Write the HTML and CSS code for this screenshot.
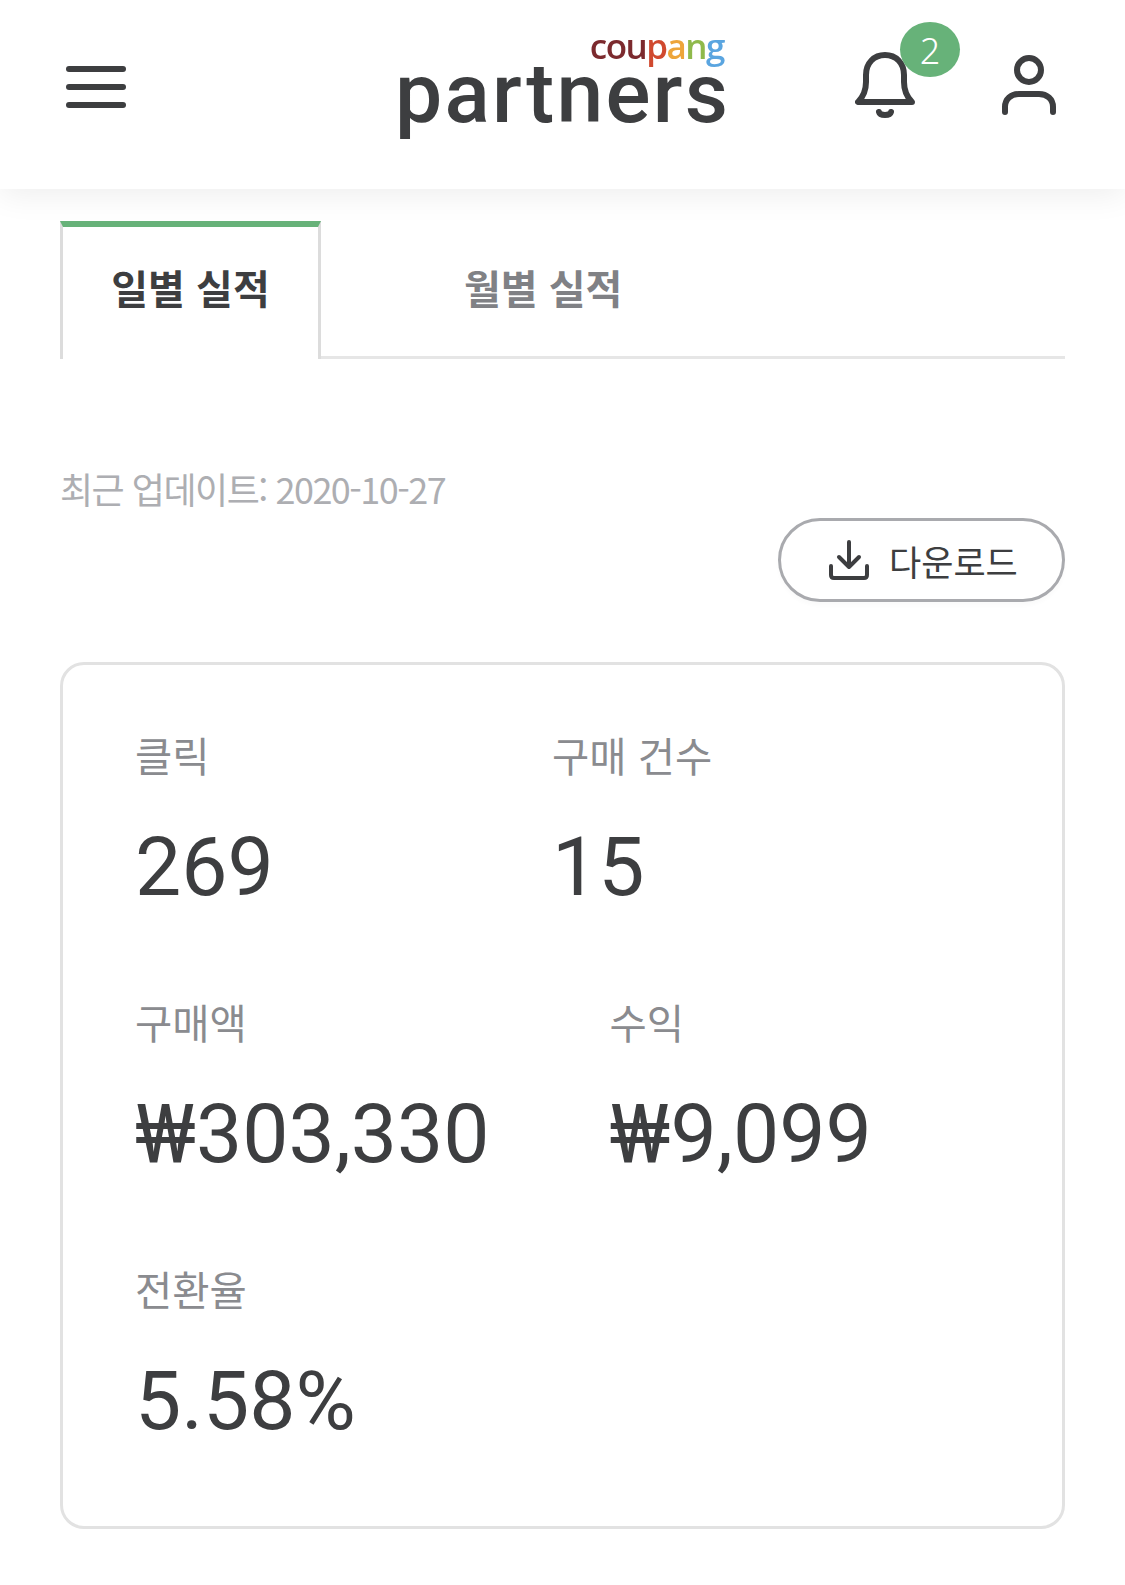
FILE: index.html
```html
<!DOCTYPE html>
<html lang="ko">
<head>
<meta charset="utf-8">
<title>partners</title>
<link rel="stylesheet" href="styles.css">
</head>
<body>
<header class="header">
  <button class="icon-btn menu" aria-label="메뉴">
    <span class="bar"></span><span class="bar"></span><span class="bar"></span>
  </button>
  <div class="logo">
    <div class="logo-top"><span class="c1">cou</span><span class="c2">p</span><span class="c3">a</span><span class="c4">n</span><span class="c5">g</span></div>
    <div class="logo-main">partners</div>
  </div>
  <div class="header-actions">
    <div class="bell">
      <svg width="60" height="66" viewBox="0 0 60 66" fill="none" stroke="#3d3e40" stroke-width="6" stroke-linecap="round" stroke-linejoin="round">
        <path d="M3 50h54c-6-6-8-12-8-20v-7C49 11 41 3 30 3S11 11 11 23v7c0 8-2 14-8 20z"/>
        <path d="M24 60c1 4 11 4 12 0" />
      </svg>
      <span class="badge">2</span>
    </div>
    <svg class="user" width="54" height="60" viewBox="0 0 54 60" fill="none" stroke="#3d3e40" stroke-width="6" stroke-linecap="round">
      <circle cx="27" cy="15" r="12"/>
      <path d="M3 57V52c0-8 6-13 14-13h20c8 0 14 5 14 13v5"/>
    </svg>
  </div>
</header>

<main class="main">
  <nav class="tabs">
    <div class="tab active">일별 실적</div>
    <div class="tab">월별 실적</div>
    <div class="tab-fill"></div>
  </nav>

  <p class="updated">최근 업데이트: 2020-10-27</p>

  <div class="toolbar">
    <button class="download">
      <svg width="42" height="42" viewBox="0 0 42 42" fill="none" stroke="#3d3e40" stroke-width="4" stroke-linecap="round" stroke-linejoin="round">
        <path d="M21 3v25M11 18l10 10 10-10"/>
        <path d="M3 27v9c0 2 1 3 3 3h30c2 0 3-1 3-3v-9"/>
      </svg>
      <span>다운로드</span>
    </button>
  </div>

  <section class="card">
    <div class="stat"><div class="label">클릭</div><div class="value">269</div></div>
    <div class="stat"><div class="label">구매 건수</div><div class="value">15</div></div>
    <div class="stat"><div class="label">구매액</div><div class="value">₩303,330</div></div>
    <div class="stat"><div class="label">수익</div><div class="value">₩9,099</div></div>
    <div class="stat"><div class="label">전환율</div><div class="value">5.58%</div></div>
  </section>
</main>
</body>
</html>
```
FILE: styles.css
```css
* { box-sizing: border-box; }
html, body { margin: 0; padding: 0; background: #fff; }
body {
  width: 1125px;
  min-height: 1585px;
  overflow: hidden;
  color: #3d3e40;
  font-family: "Noto Sans CJK KR", "Noto Sans", sans-serif;
}
.header {
  height: 189px;
  display: flex;
  align-items: flex-start;
  padding: 0 69px 0 66px;
  background: #fff;
  box-shadow: 0 6px 30px rgba(0, 0, 0, 0.07);
  position: relative;
}
.icon-btn { border: 0; background: none; padding: 0; }
.menu {
  width: 60px;
  margin-top: 66px;
  display: flex;
  flex-direction: column;
  gap: 12px;
}
.bar { display: block; height: 6px; border-radius: 3px; background: #3d3e40; }
.logo {
  margin-left: 269px;
  margin-top: 30px;
  width: 333px;
  filter: blur(0.7px);
}
.logo-top {
  font-family: "Open Sans", sans-serif;
  text-align: right;
  font-size: 35px;
  font-weight: 600;
  line-height: 31px;
  letter-spacing: -1.5px;
  padding-right: 4px;
}
.c1 { color: #7c2a2e; }
.c2 { color: #d0492f; }
.c3 { color: #eda53a; }
.c4 { color: #8fb94b; }
.c5 { color: #5aa5e0; }
.logo-main {
  margin-top: 2px;
  font-family: Roboto, sans-serif;
  font-size: 84px;
  font-weight: 500;
  line-height: 62px;
  letter-spacing: 2.3px;
  color: #3d3e40;
}
.header-actions {
  margin-left: auto;
  margin-top: 52px;
  display: flex;
  gap: 87px;
  align-items: flex-start;
}
.bell { position: relative; width: 60px; height: 66px; }
.bell svg { display: block; }
.badge {
  position: absolute;
  left: 45px;
  top: -30px;
  width: 60px;
  height: 55px;
  border-radius: 50%;
  background: #67b279;
  color: #fff;
  font-family: "Noto Sans", sans-serif;
  font-size: 36px;
  font-weight: 300;
  line-height: 57px;
  text-align: center;
}
.user { display: block; margin-top: 3px; }
.main { padding: 32px 60px 0; }
.tabs { display: flex; height: 138px; }
.tab {
  width: 261px;
  padding-top: 33px;
  border-bottom: 3px solid #e6e6e6;
  font-size: 40px;
  font-weight: 700;
  line-height: 66px;
  text-align: center;
  color: #808185;
}
.tab + .tab { width: 444px; padding-right: 0; text-align: left; padding-left: 143px; }
.tab.active {
  border-top: 6px solid #67b279;
  border-left: 3px solid #dcdcdc;
  border-right: 3px solid #dcdcdc;
  border-bottom: 0;
  padding-top: 27px;
  color: #3d3e40;
}
.tab-fill { flex: 1; border-bottom: 3px solid #e6e6e6; }
.updated {
  margin: 100px 0 0;
  font-size: 36px;
  font-weight: 400;
  line-height: 59px;
  letter-spacing: -1.5px;
  color: #adaeb2;
}
.toolbar { display: flex; justify-content: flex-end; }
.download {
  width: 287px;
  height: 84px;
  border: 3px solid #a9aaae;
  border-radius: 42px;
  background: #fff;
  box-shadow: 0 4px 4px rgba(0, 0, 0, 0.02);
  display: flex;
  align-items: center;
  gap: 19px;
  padding: 0 0 0 47px;
  color: #3d3e40;
  font-family: inherit;
  font-size: 35px;
  font-weight: 400;
}
.card {
  margin-top: 60px;
  height: 867px;
  border: 3px solid #e2e2e2;
  border-radius: 24px;
  padding: 60px 0 0 72px;
  display: flex;
  flex-wrap: wrap;
  align-content: flex-start;
}
.stat {
  min-width: 417px;
  height: 267px;
  padding-right: 120px;
}
.label {
  font-size: 40.5px;
  font-weight: 400;
  line-height: 60px;
  color: #8a8b8f;
}
.value {
  margin-top: 34px;
  font-family: Roboto, "Noto Sans", sans-serif;
  font-size: 82.3px;
  line-height: 96px;
  color: #3d3e40;
}
```
